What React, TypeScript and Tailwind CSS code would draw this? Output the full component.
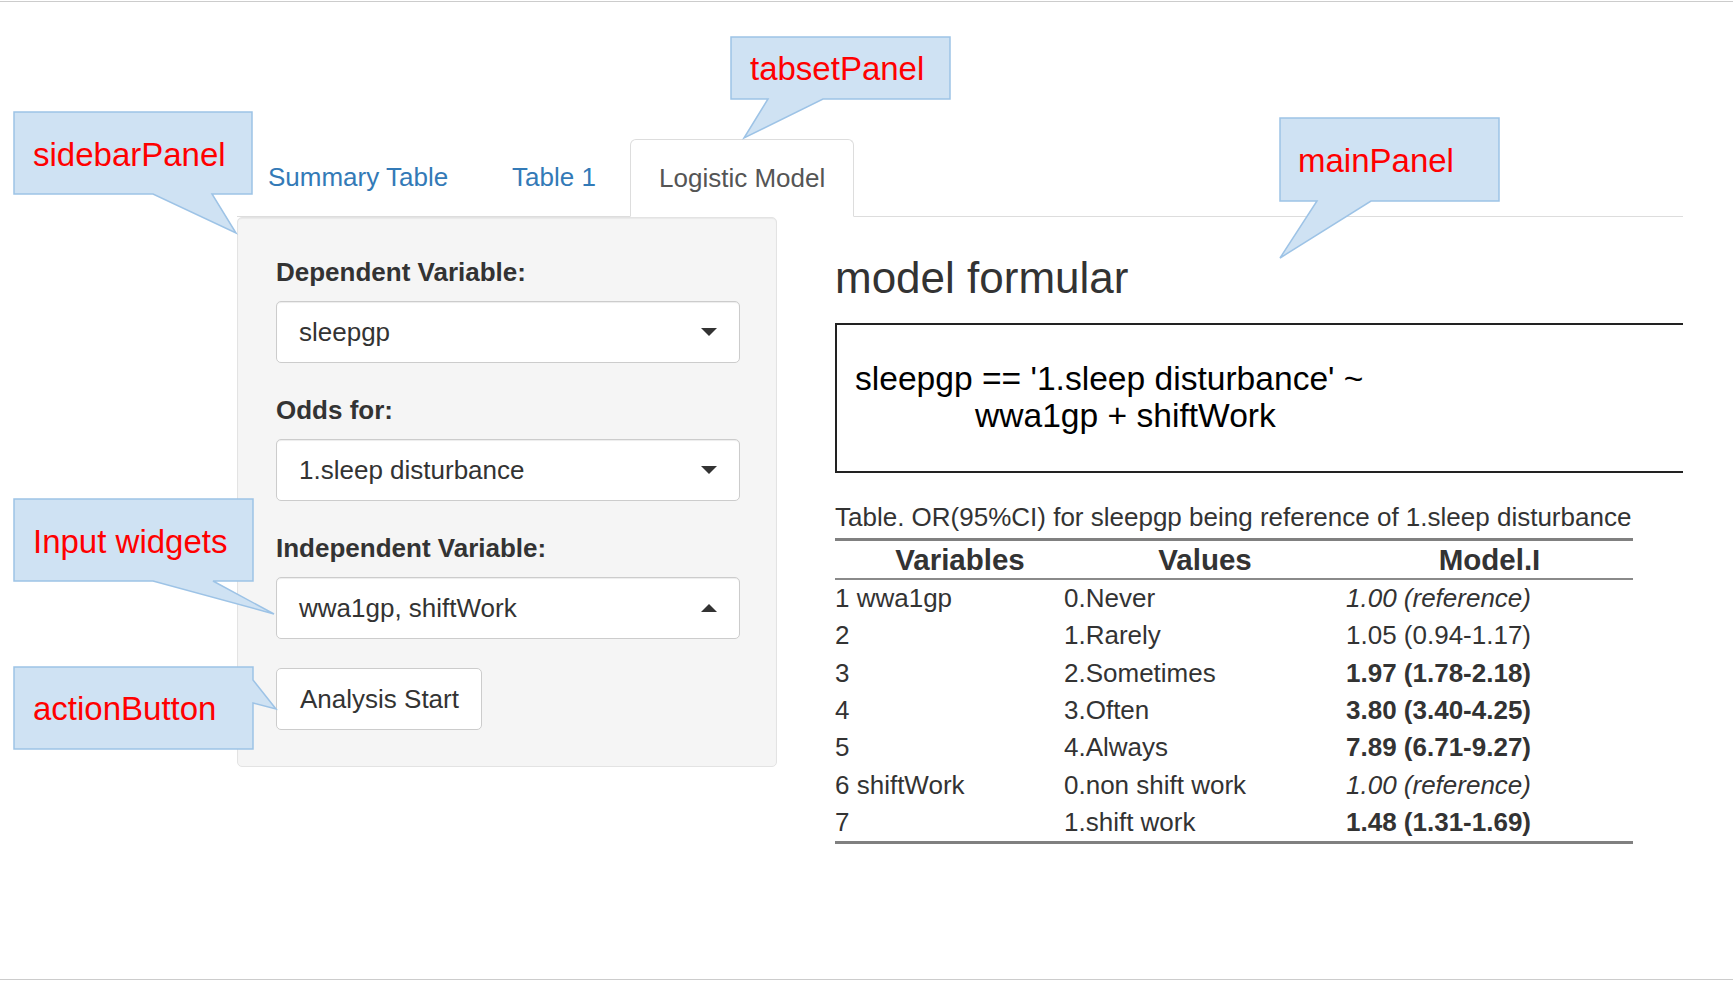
import React from 'react'

const rows = [
  { name: '1 wwa1gp', value: '0.Never', or: '1.00 (reference)', kind: 'ref' },
  { name: '2', value: '1.Rarely', or: '1.05 (0.94-1.17)', kind: 'plain' },
  { name: '3', value: '2.Sometimes', or: '1.97 (1.78-2.18)', kind: 'sig' },
  { name: '4', value: '3.Often', or: '3.80 (3.40-4.25)', kind: 'sig' },
  { name: '5', value: '4.Always', or: '7.89 (6.71-9.27)', kind: 'sig' },
  { name: '6 shiftWork', value: '0.non shift work', or: '1.00 (reference)', kind: 'ref' },
  { name: '7', value: '1.shift work', or: '1.48 (1.31-1.69)', kind: 'sig' },
]

const Caret = ({ up }: { up?: boolean }) => (
  <svg width="16" height="8" viewBox="0 0 16 8" className="shrink-0">
    {up ? <polygon points="0,8 16,8 8,0" fill="#333" /> : <polygon points="0,0 16,0 8,8" fill="#333" />}
  </svg>
)

const SelectBox = ({ label, value, up }: { label: string; value: string; up?: boolean }) => (
  <div className="mb-[29px]">
    <div className="mb-[10px] text-[26px] leading-[37px] font-bold text-[#333]">{label}</div>
    <div className="flex h-[62px] w-[464px] items-center justify-between rounded-[5px] border border-[#ccc] bg-white pr-[22px] pl-[22px] shadow-[inset_0_1px_1px_rgba(0,0,0,0.075)]">
      <span className="text-[26px] leading-[37px] text-[#333]">{value}</span>
      <Caret up={up} />
    </div>
  </div>
)

// annotation bubbles drawn over the screenshot
const callouts = [
  { text: 'sidebarPanel', left: 33, top: 138, points: '14,112 252,112 252,194 212,194 236,233 153,194 14,194' },
  { text: 'tabsetPanel', left: 750, top: 52, points: '731,37 950,37 950,99 823,99 744,138 768,99 731,99' },
  { text: 'mainPanel', left: 1298, top: 144, points: '1280,118 1499,118 1499,201 1371,201 1280,258 1317,201 1280,201' },
  { text: 'Input widgets', left: 33, top: 525, points: '14,499 253,499 253,581 213,581 274,614 153,581 14,581' },
  { text: 'actionButton', left: 33, top: 692, points: '14,667 253,667 253,680 276,709 253,703 253,749 14,749' },
]

export default function App() {
  return (
    <div className="relative flex h-[983px] w-full flex-col overflow-hidden bg-white font-['Liberation_Sans',Arial,sans-serif]">
      <div className="mt-px h-px w-full bg-[#ccc]" />

      <div className="flex-1 pt-[137px] pl-[237px]">
        {/* tabs */}
        <div className="flex h-[78px] w-[1446px] border-b border-[#ddd]">
          <div className="flex h-[77px] w-[241px] items-center pl-[31px] text-[26px] leading-[37px] text-[#337ab7]">
            Summary Table
          </div>
          <div className="flex h-[77px] w-[148px] items-center pl-[34px] text-[26px] leading-[37px] text-[#337ab7]">
            Table 1
          </div>
          <div className="-mb-px ml-[4px] flex h-[78px] w-[224px] items-center rounded-t-[6px] border border-[#ddd] border-b-white bg-white pl-[28px] text-[26px] leading-[37px] text-[#555]">
            Logistic Model
          </div>
        </div>

        <div className="flex">
          {/* sidebar */}
          <div className="h-[550px] w-[540px] rounded-[5px] border border-[#e3e3e3] bg-[#f5f5f5] pt-[36px] pl-[38px] shadow-[inset_0_1px_1px_rgba(0,0,0,0.05)]">
            <SelectBox label="Dependent Variable:" value="sleepgp" />
            <SelectBox label="Odds for:" value="1.sleep disturbance" />
            <SelectBox label="Independent Variable:" value="wwa1gp, shiftWork" up />
            <button className="h-[62px] w-[206px] rounded-[5px] border border-[#ccc] bg-white pl-[23px] text-left text-[26px] leading-[37px] text-[#333]">
              Analysis Start
            </button>
          </div>

          {/* main */}
          <div className="ml-[58px] w-[848px] pt-[37px]">
            <h3 className="text-[44px] leading-[48px] text-[#333]">model formular</h3>
            <div className="mt-[21px] flex h-[150px] flex-col justify-center border-t-2 border-b-2 border-l-2 border-[#222] pb-[2px] pl-[18px] text-[33.6px] leading-[37px] text-black">
              <div>sleepgp == '1.sleep disturbance' ~</div>
              <div className="pl-[120px]">wwa1gp + shiftWork</div>
            </div>

            <div className="mt-[26px] text-[26px] leading-[37px] text-[#333]">
              Table. OR(95%CI) for sleepgp being reference of 1.sleep disturbance
            </div>
            <div className="mt-[2px] w-[798px] border-t-[3px] border-b-[3px] border-[#808080] text-[#333]">
              <div className="grid h-[39px] grid-cols-[229px_282px_287px] border-b-2 border-[#8a8a8a] text-[29.5px] leading-[37px] font-bold">
                <div className="pl-[21px] text-center">Variables</div>
                <div className="text-center">Values</div>
                <div className="text-center">Model.I</div>
              </div>
              {rows.map((r) => (
                <div key={r.name} className="grid h-[37.33px] grid-cols-[229px_282px_287px] text-[26px] leading-[37.33px]">
                  <div>{r.name}</div>
                  <div>{r.value}</div>
                  <div className={r.kind === 'ref' ? 'italic' : r.kind === 'sig' ? 'font-bold' : ''}>{r.or}</div>
                </div>
              ))}
            </div>
          </div>
        </div>
      </div>

      <div className="mb-[3px] h-px w-full bg-[#ccc]" />

      <svg className="pointer-events-none absolute top-0 left-0" width="1733" height="983">
        {callouts.map((c) => (
          <polygon key={c.text} points={c.points} fill="#cfe2f3" stroke="#9dc3e6" strokeWidth="1.5" />
        ))}
      </svg>
      {callouts.map((c) => (
        <div
          key={c.text}
          className="absolute text-[33px] leading-[33px] whitespace-nowrap text-[#ff0000]"
          style={{ left: c.left, top: c.top }}
        >
          {c.text}
        </div>
      ))}
    </div>
  )
}
